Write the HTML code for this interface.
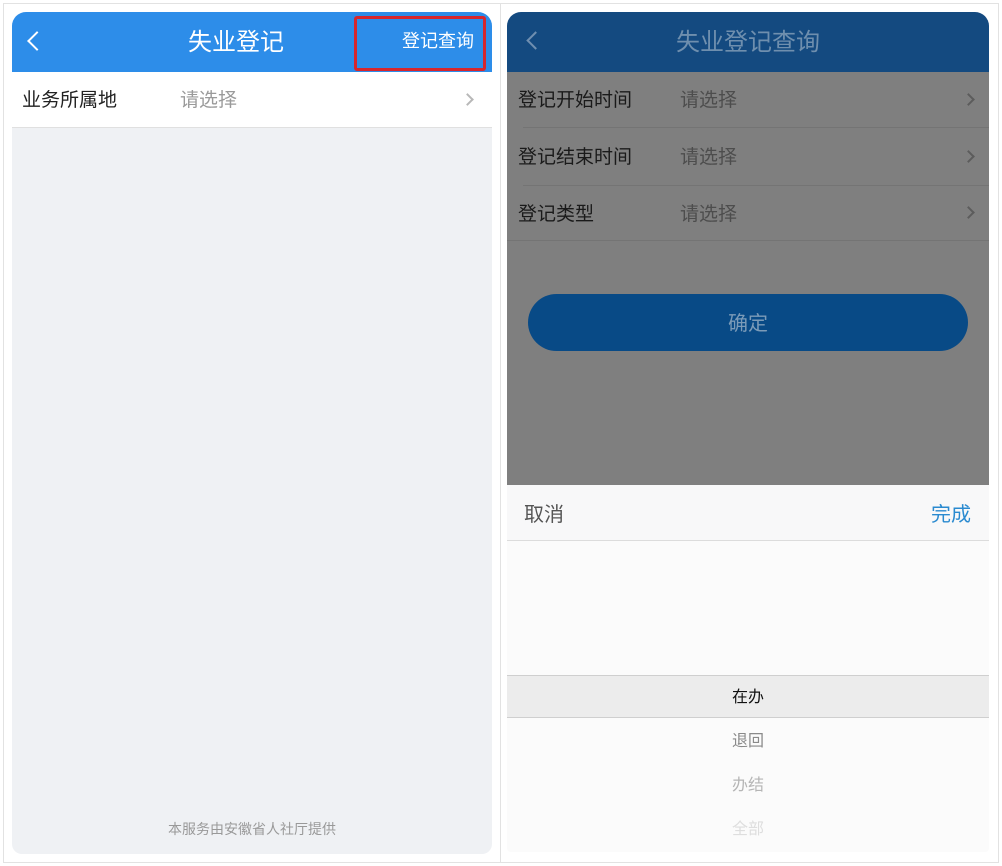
<!DOCTYPE html>
<html><head><meta charset="utf-8"><style>
*{margin:0;padding:0;box-sizing:border-box}
body{width:1002px;height:866px;background:#fff;position:relative;overflow:hidden;font-family:"Liberation Sans","Noto Sans CJK SC",sans-serif}
.frame{position:absolute;border:1px solid #e2e2e2}
.p{position:absolute;overflow:hidden}
.abs{position:absolute}
.chev{position:absolute;width:9px;height:9px;border-top:2px solid #b8b8b8;border-right:2px solid #b8b8b8;transform:rotate(45deg)}
</style></head><body>
<div class="frame" style="left:3px;top:3px;width:498px;height:860px"></div>
<div class="frame" style="left:500px;top:3px;width:499px;height:860px"></div>

<!-- LEFT -->
<div class="p" style="left:12px;top:12px;width:480px;height:842px;background:#eff1f4;border-radius:14px 14px 10px 10px">
  <div class="abs" style="left:0;top:0;width:480px;height:60px;background:#2d8de9"></div>
  <div class="abs" style="left:18px;top:22px;width:14px;height:14px;border-left:2.5px solid #fff;border-bottom:2.5px solid #fff;transform:rotate(45deg)"></div>
  <div class="abs" style="left:176px;top:10px;color:#fff;font-size:24px">失业登记</div>
  <div class="abs" style="left:342px;top:4px;width:132px;height:55px;border:3px solid #d7262d;border-radius:3px"></div>
  <div class="abs" style="left:390px;top:15px;color:#fff;font-size:18px">登记查询</div>
  <div class="abs" style="left:0;top:60px;width:480px;height:56px;background:#fff;border-bottom:1px solid #e0e0e0"></div>
  <div class="abs" style="left:10px;top:73px;font-size:19px;color:#222">业务所属地</div>
  <div class="abs" style="left:168px;top:73px;font-size:19px;color:#9a9a9a">请选择</div>
  <div class="chev" style="left:451px;top:83px"></div>
  <div class="abs" style="left:0;top:807px;width:480px;text-align:center;font-size:14px;color:#999">本服务由安徽省人社厅提供</div>
</div>

<!-- RIGHT -->
<div class="p" style="left:507px;top:12px;width:482px;height:840px;background:#fbfbfb;border-radius:14px 14px 4px 4px">
  <div class="abs" style="left:0;top:0;width:482px;height:60px;background:#144a80"></div>
  <div class="abs" style="left:22px;top:22px;width:13px;height:13px;border-left:2px solid #6f8fb0;border-bottom:2px solid #6f8fb0;transform:rotate(45deg)"></div>
  <div class="abs" style="left:0;top:10px;width:482px;text-align:center;color:#6f8fae;font-size:24px">失业登记查询</div>
  <div class="abs" style="left:0;top:60px;width:482px;height:413px;background:#7f7f7f"></div>
  <div class="abs" style="left:16px;top:115px;width:466px;height:1px;background:#747474"></div>
  <div class="abs" style="left:16px;top:173px;width:466px;height:1px;background:#747474"></div>
  <div class="abs" style="left:0;top:228px;width:482px;height:1px;background:#747474"></div>
  <div class="abs" style="left:11px;top:73px;font-size:19px;color:#1a1a1a">登记开始时间</div>
  <div class="abs" style="left:173px;top:73px;font-size:19px;color:#4d4d4d">请选择</div>
  <div class="abs" style="left:11px;top:130px;font-size:19px;color:#1a1a1a">登记结束时间</div>
  <div class="abs" style="left:173px;top:130px;font-size:19px;color:#4d4d4d">请选择</div>
  <div class="abs" style="left:11px;top:187px;font-size:19px;color:#1a1a1a">登记类型</div>
  <div class="abs" style="left:173px;top:187px;font-size:19px;color:#4d4d4d">请选择</div>
  <div class="chev" style="left:457px;top:83px;border-color:#5c5c5c"></div>
  <div class="chev" style="left:457px;top:140px;border-color:#5c5c5c"></div>
  <div class="chev" style="left:457px;top:196px;border-color:#5c5c5c"></div>
  <div class="abs" style="left:21px;top:282px;width:440px;height:57px;border-radius:29px;background:#084a86"></div>
  <div class="abs" style="left:0;top:295px;width:482px;text-align:center;font-size:20px;color:#7b9bb8">确定</div>
  <div class="abs" style="left:0;top:473px;width:482px;height:56px;background:#f8f8f9;border-bottom:1px solid #dcdcdc"></div>
  <div class="abs" style="left:17px;top:486px;font-size:20px;color:#555">取消</div>
  <div class="abs" style="left:424px;top:486px;font-size:20px;color:#2a8ad0">完成</div>
  <div class="abs" style="left:0;top:663px;width:482px;height:43px;background:#ececec;border-top:1px solid #cfcfcf;border-bottom:1px solid #cfcfcf"></div>
  <div class="abs" style="left:0;top:671px;width:482px;text-align:center;font-size:16px;color:#111">在办</div>
  <div class="abs" style="left:0;top:715px;width:482px;text-align:center;font-size:16px;color:#8a8a8a">退回</div>
  <div class="abs" style="left:0;top:759px;width:482px;text-align:center;font-size:16px;color:#b5b5b5">办结</div>
  <div class="abs" style="left:0;top:803px;width:482px;text-align:center;font-size:16px;color:#dedede">全部</div>
</div>
</body></html>
